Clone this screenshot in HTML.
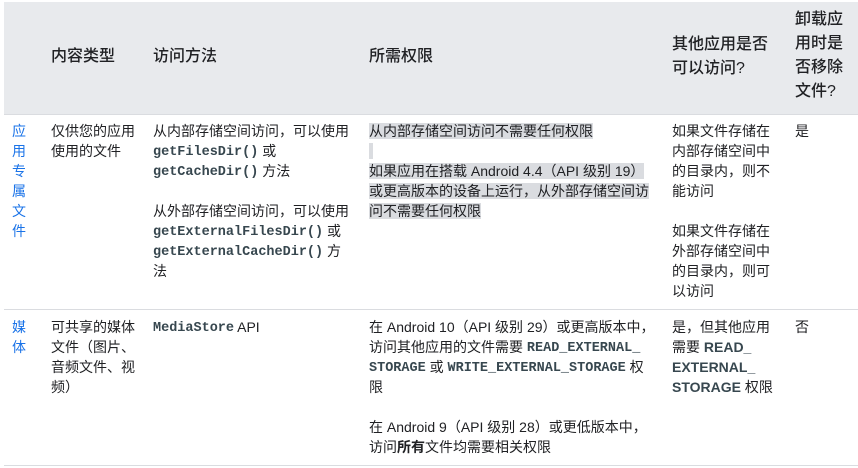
<!DOCTYPE html><html><head><meta charset="utf-8"><style>
body{margin:0;width:858px;height:468px;background:#fff;position:relative;overflow:hidden;font-family:"Liberation Sans","Noto Sans CJK SC",sans-serif;font-size:14px;color:#202124}
.a{position:absolute;line-height:20px;white-space:nowrap}
.h{position:absolute;font-size:16px;font-weight:500;line-height:24px;white-space:nowrap;color:#202124}
code{font-family:"Liberation Mono",monospace;font-weight:bold;color:#37474f;font-size:13.5px;display:inline-block;height:20px;line-height:20px;vertical-align:top;position:relative;top:2px}
.m{font-family:"Liberation Sans",sans-serif;font-weight:bold;color:#37474f}
.hl{background:#dadce0}
.l{color:#1a73e8}
</style></head><body>
<div style="position:absolute;left:4px;top:2px;width:854px;height:112px;background:#e8eaed"></div>
<div style="position:absolute;left:4px;top:114px;width:854px;height:1px;background:#dadce0"></div>
<div style="position:absolute;left:4px;top:309px;width:854px;height:1px;background:#dadce0"></div>
<div style="position:absolute;left:4px;top:465px;width:854px;height:1px;background:#dadce0"></div>

<div class="h" style="left:51px;top:45px">内容类型</div>
<div class="h" style="left:153px;top:45px">访问方法</div>
<div class="h" style="left:369px;top:45px">所需权限</div>
<div class="h" style="left:672px;top:33px">其他应用是否<br>可以访问?</div>
<div class="h" style="left:795px;top:8px">卸载应<br>用时是<br>否移除<br>文件?</div>

<div class="a l" style="left:12px;top:121px">应<br>用<br>专<br>属<br>文<br>件</div>
<div class="a" style="left:51px;top:121px">仅供您的应用<br>使用的文件</div>
<div class="a" style="left:153px;top:121px">从内部存储空间访问，可以使用<br><code>getFilesDir()</code> 或<br><code>getCacheDir()</code> 方法<br><br>从外部存储空间访问，可以使用<br><code>getExternalFilesDir()</code> 或<br><code>getExternalCacheDir()</code> 方<br>法</div>
<div class="a" style="left:369px;top:121px"><span class="hl">从内部存储空间访问不需要任何权限</span><br><span class="hl">&nbsp;</span><br><span class="hl">如果应用在搭载 Android 4.4（API 级别 19）</span><br><span class="hl">或更高版本的设备上运行，从外部存储空间访</span><br><span class="hl">问不需要任何权限</span></div>
<div class="a" style="left:672px;top:121px">如果文件存储在<br>内部存储空间中<br>的目录内，则不<br>能访问<br><br>如果文件存储在<br>外部存储空间中<br>的目录内，则可<br>以访问</div>
<div class="a" style="left:795px;top:121px">是</div>

<div class="a l" style="left:12px;top:317px">媒<br>体</div>
<div class="a" style="left:51px;top:317px">可共享的媒体<br>文件（图片、<br>音频文件、视<br>频）</div>
<div class="a" style="left:153px;top:317px"><code>MediaStore</code> API</div>
<div class="a" style="left:369px;top:317px">在 Android 10（API 级别 29）或更高版本中，<br>访问其他应用的文件需要 <code>READ_EXTERNAL_</code><br><code>STORAGE</code> 或 <code>WRITE_EXTERNAL_STORAGE</code> 权<br>限<br><br>在 Android 9（API 级别 28）或更低版本中，<br>访问<b>所有</b>文件均需要相关权限</div>
<div class="a" style="left:672px;top:317px">是，但其他应用<br>需要 <span class="m">READ_</span><br><span class="m">EXTERNAL_</span><br><span class="m">STORAGE</span> 权限</div>
<div class="a" style="left:795px;top:317px">否</div>
</body></html>
